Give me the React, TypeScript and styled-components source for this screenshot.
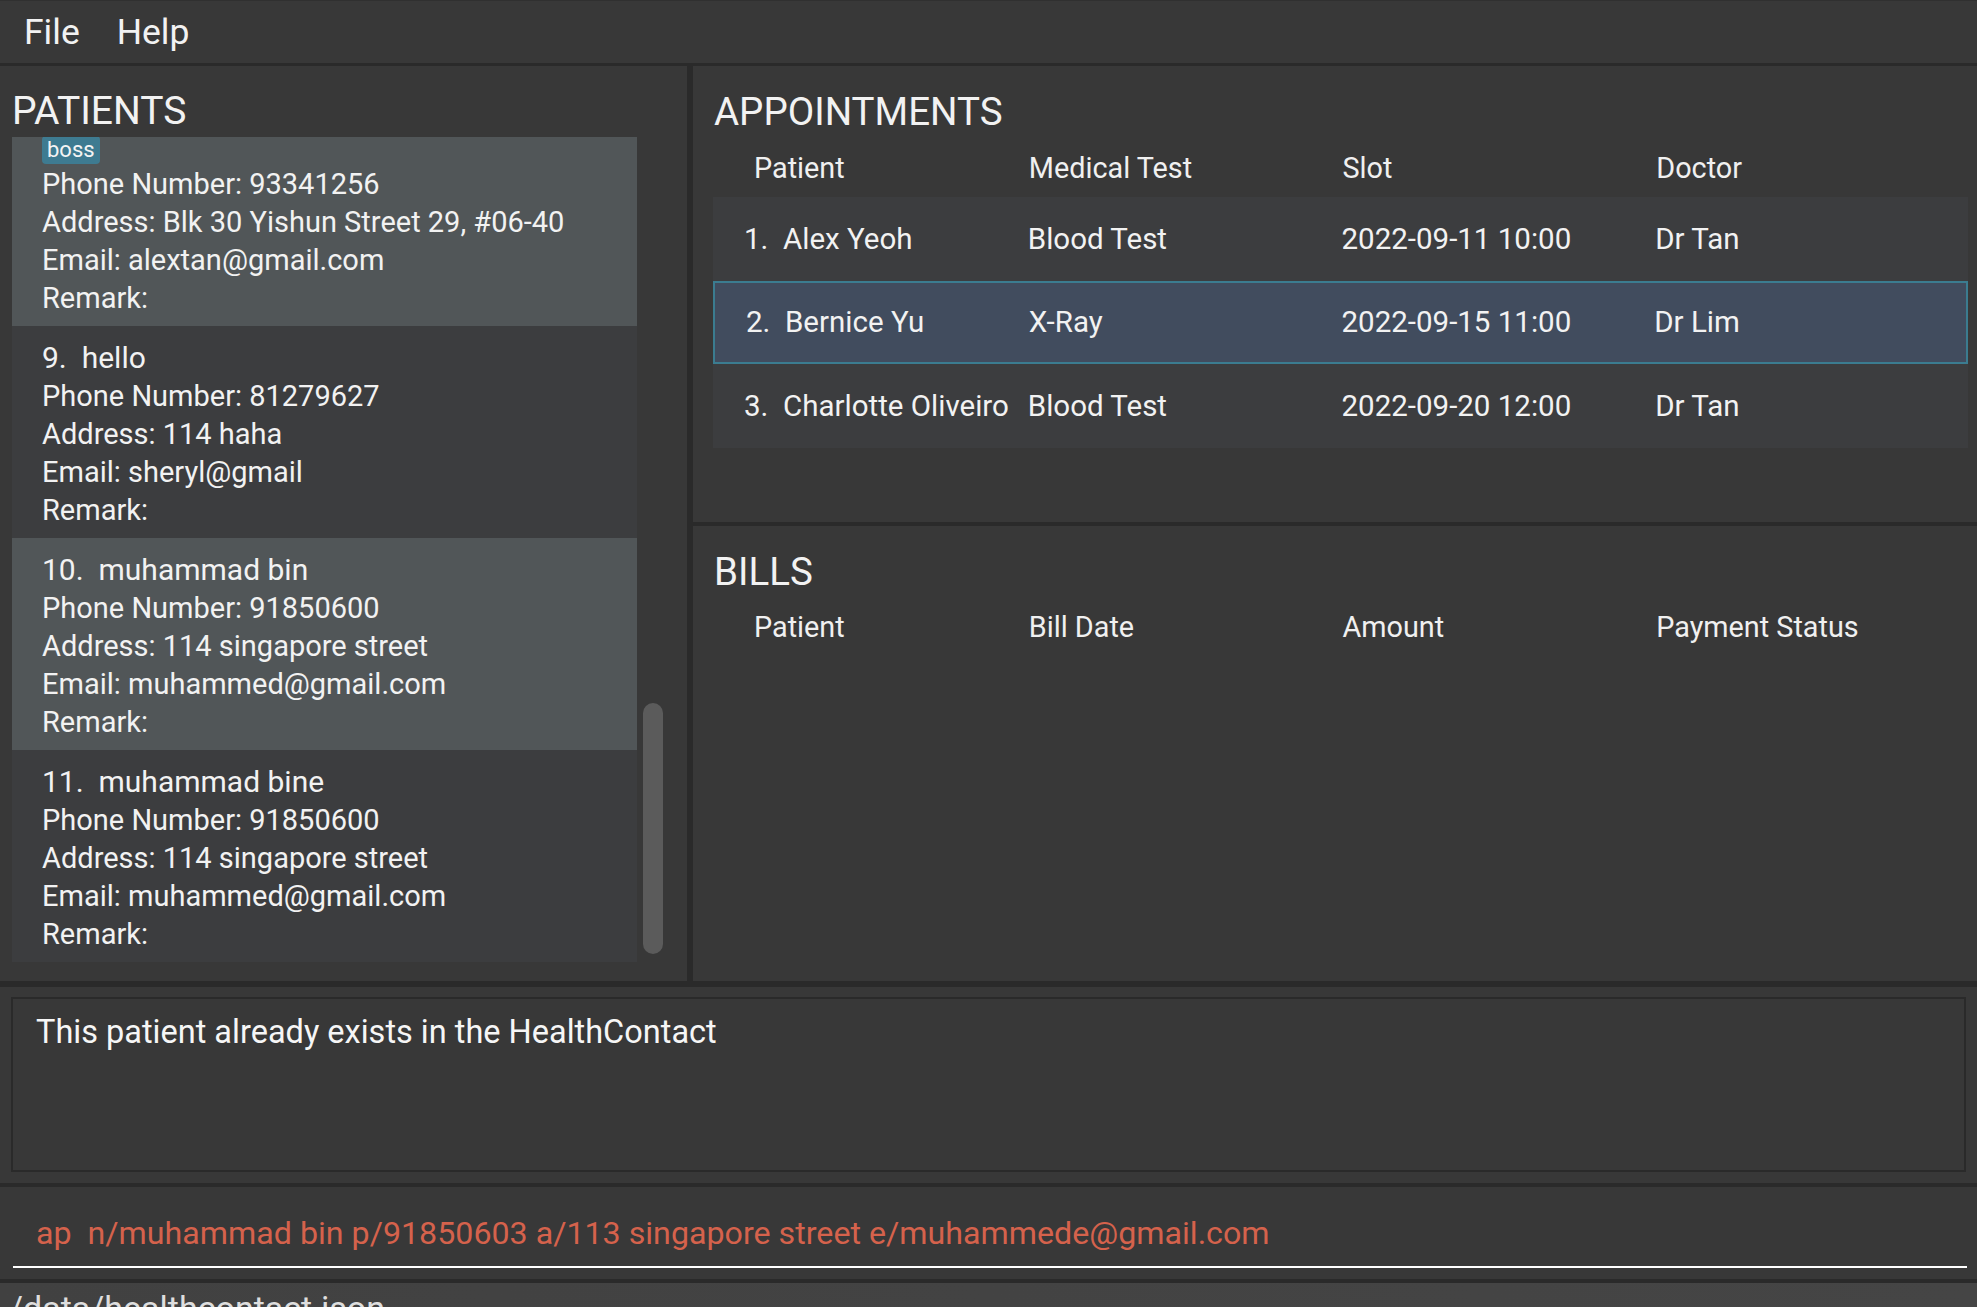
import React, { useLayoutEffect, useRef } from 'react';
import styled, { createGlobalStyle } from 'styled-components';

const GlobalStyle = createGlobalStyle`
  html, body {
    margin: 0;
    padding: 0;
    background: #2a2a2a;
    overflow: hidden;
  }
  body {
    font-family: Roboto, "Liberation Sans", sans-serif;
    color: #f2f2f2;
  }
  * { box-sizing: border-box; }
`;

const Window = styled.div`
  width: 1977px;
  height: 1307px;
  display: flex;
  flex-direction: column;
  background: #2a2a2a;
  overflow: hidden;
`;

const MenuBar = styled.div`
  flex: none;
  height: 66px;
  display: flex;
  align-items: center;
  gap: 37px;
  padding-left: 24px;
  background: #383838;
  border-top: 1px solid #303030;
  border-bottom: 3px solid #2a2a2a;
`;

const MenuItem = styled.span`
  font-size: 35.5px;
  line-height: 40px;
  color: #f2f2f2;
`;

const Main = styled.div`
  flex: none;
  height: 915px;
  display: grid;
  grid-template-columns: 687px 1fr;
  gap: 6px;
`;

const LeftPane = styled.div`
  display: flex;
  flex-direction: column;
  min-height: 0;
  background: #383838;
  padding: 25px 18px 19px 12px;
`;

const PaneTitle = styled.div`
  font-size: 39px;
  line-height: 40px;
  color: #f2f2f2;
  margin-bottom: 6px;
`;

const ListFrame = styled.div`
  flex: 1;
  min-height: 0;
  display: flex;
`;

const ListViewport = styled.div`
  flex: 1;
  min-width: 0;
  overflow: hidden;
`;

const ScrollTrack = styled.div`
  flex: none;
  width: 32px;
  padding: 8px 6px;
  display: flex;
  flex-direction: column;
  justify-content: flex-end;
`;

const ScrollThumb = styled.div`
  height: 251px;
  border-radius: 10px;
  background: #5b5b5b;
`;

const Card = styled.div<{ $light: boolean }>`
  background: ${p => (p.$light ? '#515658' : '#3c3d3f')};
  padding: 13px 0 9px 30px;
`;

const CardHeading = styled.div`
  font-size: 30px;
  line-height: 38px;
  white-space: nowrap;
`;

const CardLine = styled.div`
  font-size: 29px;
  line-height: 38px;
  white-space: nowrap;
  overflow: hidden;
`;

const TagRow = styled.div`
  display: flex;
  gap: 8px;
  height: 34px;
  padding-top: 5px;
`;

const Tag = styled.span`
  height: 28px;
  padding: 0 5px;
  font-size: 22px;
  line-height: 28px;
  color: #f4f4f4;
  background: #3e7b91;
  border-radius: 4px;
`;

const RightPane = styled.div`
  display: grid;
  grid-template-rows: 456px 1fr;
  gap: 4px;
  min-height: 0;
`;

const Section = styled.div<{ $top: number }>`
  background: #383838;
  padding: ${p => p.$top}px 9px 0 20px;
  overflow: hidden;
`;

const SectionTitle = styled.div`
  font-size: 38.5px;
  line-height: 40px;
  padding-left: 1px;
  color: #f2f2f2;
`;

const HeaderRow = styled.div<{ $top: number }>`
  display: grid;
  grid-template-columns: repeat(4, 1fr);
  margin-top: ${p => p.$top}px;
  margin-bottom: 9px;
  font-size: 28.8px;
  line-height: 40px;
  color: #f0f0f0;
`;

const HeaderCell = styled.div<{ $first?: boolean }>`
  padding-left: ${p => (p.$first ? 41 : 2)}px;
  white-space: nowrap;
`;

const TableRow = styled.div<{ $selected?: boolean }>`
  display: grid;
  grid-template-columns: repeat(4, 1fr);
  align-items: center;
  height: 83.5px;
  font-size: 29.5px;
  background: ${p => (p.$selected ? '#414c5e' : '#3c3d3f')};
  border: ${p => (p.$selected ? '2px solid #3b7c90' : 'none')};
`;

const Cell = styled.div<{ $first?: boolean }>`
  padding-left: ${p => (p.$first ? 31 : 1)}px;
  white-space: nowrap;
  color: #f2f2f2;
`;

const ResultArea = styled.div`
  flex: none;
  height: 196px;
  margin-top: 6px;
  padding: 10px 11px 11px 11px;
  background: #383838;
`;

const ResultBox = styled.div`
  height: 100%;
  border: 2px solid #2a2a2a;
  padding: 13px 23px;
  font-size: 32.5px;
  line-height: 40px;
  color: #f6f6f6;
`;

const CommandArea = styled.div`
  flex: none;
  height: 92px;
  margin-top: 4px;
  padding: 26px 10px 0 13px;
  background: #383838;
`;

const CommandInput = styled.div`
  padding: 0 0 13px 23px;
  border-bottom: 2px solid #ffffff;
  font-size: 32.2px;
  line-height: 40px;
  color: #d5624c;
  white-space: pre;
`;

const StatusBar = styled.div`
  flex: 1;
  margin-top: 4px;
  padding: 5px 0 0 9px;
  background: linear-gradient(90deg, #414141, #454545);
  font-size: 34px;
  line-height: 40px;
  color: #dedede;
  overflow: hidden;
`;

interface Patient {
  name: string;
  phone: string;
  address: string;
  email: string;
  tags: string[];
}

const patients: Patient[] = [
  { name: 'Alex Yeoh', phone: '87438807', address: 'Blk 30 Geylang Street 29, #06-40', email: 'alexyeoh@example.com', tags: ['friends'] },
  { name: 'Bernice Yu', phone: '99272758', address: 'Blk 30 Lorong 3 Serangoon Gardens', email: 'berniceyu@example.com', tags: ['colleagues', 'friends'] },
  { name: 'Charlotte Oliveiro', phone: '93210283', address: 'Blk 11 Ang Mo Kio Street 74, #11-04', email: 'charlotte@example.com', tags: ['neighbours'] },
  { name: 'David Li', phone: '91031282', address: 'Blk 436 Serangoon Gardens Street 26', email: 'lidavid@example.com', tags: ['family'] },
  { name: 'Irfan Ibrahim', phone: '92492021', address: 'Blk 47 Tampines Street 20, #17-35', email: 'irfan@example.com', tags: ['classmates'] },
  { name: 'Roy Balakrishnan', phone: '92624417', address: 'Blk 45 Aljunied Street 85, #11-31', email: 'royb@example.com', tags: ['colleagues'] },
  { name: 'john doe', phone: '98765432', address: '311 Clementi Ave 2, #02-25', email: 'johnd@example.com', tags: ['friends'] },
  { name: 'alex tan', phone: '93341256', address: 'Blk 30 Yishun Street 29, #06-40', email: 'alextan@gmail.com', tags: ['boss'] },
  { name: 'hello', phone: '81279627', address: '114 haha', email: 'sheryl@gmail', tags: [] },
  { name: 'muhammad bin', phone: '91850600', address: '114 singapore street', email: 'muhammed@gmail.com', tags: [] },
  { name: 'muhammad bine', phone: '91850600', address: '114 singapore street', email: 'muhammed@gmail.com', tags: [] },
];

const appointments = [
  { name: 'Alex Yeoh', test: 'Blood Test', slot: '2022-09-11 10:00', doctor: 'Dr Tan' },
  { name: 'Bernice Yu', test: 'X-Ray', slot: '2022-09-15 11:00', doctor: 'Dr Lim' },
  { name: 'Charlotte Oliveiro', test: 'Blood Test', slot: '2022-09-20 12:00', doctor: 'Dr Tan' },
];

const PatientCard: React.FC<{ index: number; patient: Patient }> = ({ index, patient }) => (
  <Card $light={index % 2 === 0}>
    <CardHeading>{`${index}.\u00a0\u00a0${patient.name}`}</CardHeading>
    {patient.tags.length > 0 && (
      <TagRow>
        {patient.tags.map(t => (
          <Tag key={t}>{t}</Tag>
        ))}
      </TagRow>
    )}
    <CardLine>Phone Number: {patient.phone}</CardLine>
    <CardLine>Address: {patient.address}</CardLine>
    <CardLine>Email: {patient.email}</CardLine>
    <CardLine>Remark:</CardLine>
  </Card>
);

export default function App() {
  const listRef = useRef<HTMLDivElement>(null);

  // the list is shown scrolled all the way down
  useLayoutEffect(() => {
    const el = listRef.current;
    if (el) el.scrollTop = el.scrollHeight;
  }, []);

  return (
    <>
      <GlobalStyle />
      <Window>
        <MenuBar>
          <MenuItem>File</MenuItem>
          <MenuItem>Help</MenuItem>
        </MenuBar>

        <Main>
          <LeftPane>
            <PaneTitle>PATIENTS</PaneTitle>
            <ListFrame>
              <ListViewport ref={listRef}>
                {patients.map((p, i) => (
                  <PatientCard key={i} index={i + 1} patient={p} />
                ))}
              </ListViewport>
              <ScrollTrack>
                <ScrollThumb />
              </ScrollTrack>
            </ListFrame>
          </LeftPane>

          <RightPane>
            <Section $top={26}>
              <SectionTitle>APPOINTMENTS</SectionTitle>
              <HeaderRow $top={16}>
                <HeaderCell $first>Patient</HeaderCell>
                <HeaderCell>Medical Test</HeaderCell>
                <HeaderCell>Slot</HeaderCell>
                <HeaderCell>Doctor</HeaderCell>
              </HeaderRow>
              {appointments.map((a, i) => (
                <TableRow key={i} $selected={i === 1}>
                  <Cell $first>{`${i + 1}.\u00a0\u00a0${a.name}`}</Cell>
                  <Cell>{a.test}</Cell>
                  <Cell>{a.slot}</Cell>
                  <Cell>{a.doctor}</Cell>
                </TableRow>
              ))}
            </Section>

            <Section $top={26}>
              <SectionTitle>BILLS</SectionTitle>
              <HeaderRow $top={15}>
                <HeaderCell $first>Patient</HeaderCell>
                <HeaderCell>Bill Date</HeaderCell>
                <HeaderCell>Amount</HeaderCell>
                <HeaderCell>Payment Status</HeaderCell>
              </HeaderRow>
            </Section>
          </RightPane>
        </Main>

        <ResultArea>
          <ResultBox>This patient already exists in the HealthContact</ResultBox>
        </ResultArea>

        <CommandArea>
          <CommandInput>ap  n/muhammad bin p/91850603 a/113 singapore street e/muhammede@gmail.com</CommandInput>
        </CommandArea>

        <StatusBar>/data/healthcontact.json</StatusBar>
      </Window>
    </>
  );
}
